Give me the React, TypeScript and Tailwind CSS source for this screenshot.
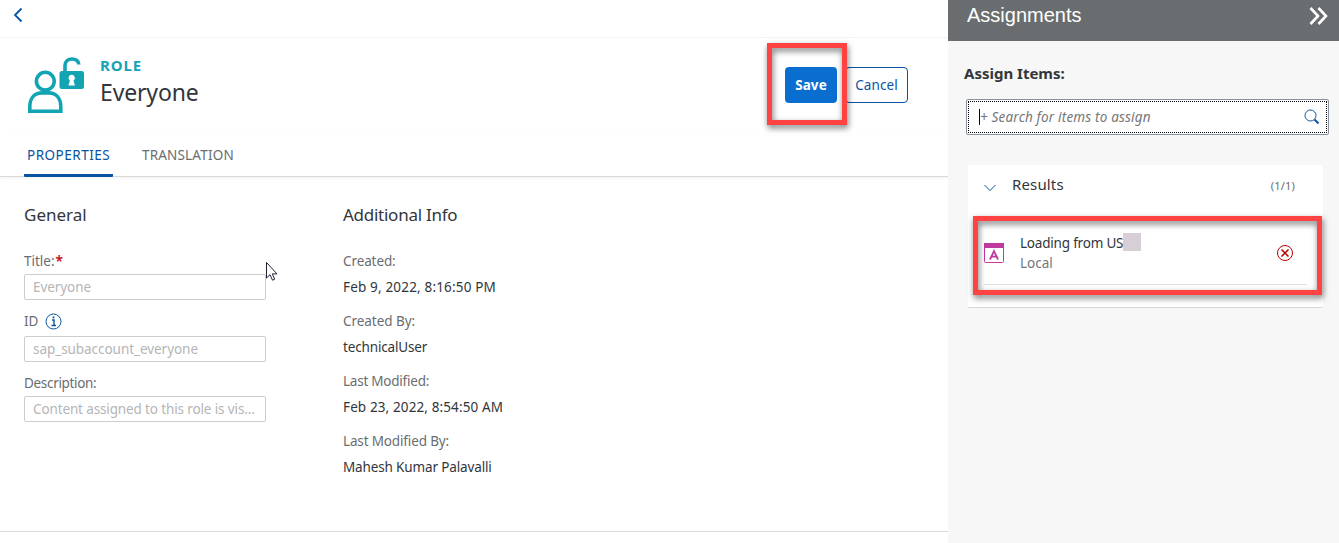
import type { ReactNode } from "react";

function Label({ children }: { children: ReactNode }) {
  return <div className="flex h-5 items-center whitespace-nowrap text-[#6a6d70]">{children}</div>;
}

function Field({ label, value, className, boxClass, valueClass }: { label: ReactNode; value: string; className: string; boxClass: string; valueClass: string }) {
  return (
    <div className={className}>
      <Label>{label}</Label>
      <div className={"flex h-[26px] w-[242px] items-center rounded-[2px] border border-[#cbcdd1] pl-2 text-[#b4b5b7] " + boxClass}>
        <span className={"whitespace-nowrap " + valueClass}>{value}</span>
      </div>
    </div>
  );
}

function Info({ label, value, labelClass, valueClass }: { label: string; value: string; labelClass: string; valueClass: string }) {
  return (
    <div className="h-[60px]">
      <Label><span className={labelClass}>{label}</span></Label>
      <div className="mt-[6px] flex h-5 items-center whitespace-nowrap text-[#32363a]"><span className={valueClass}>{value}</span></div>
    </div>
  );
}

function Highlight({ className }: { className: string }) {
  return <div className={"pointer-events-none absolute border-[5px] border-[#ff4343] drop-shadow-[1px_3px_3px_rgba(0,0,0,0.55)] " + className} />;
}

export default function App() {
  return (
    <div className="relative flex h-[543px] w-[1339px] overflow-hidden bg-white font-['Noto_Sans',sans-serif] text-[13.5px] leading-5">
      <main className="flex w-[948px] shrink-0 flex-col">
        <div className="flex h-[38px] shrink-0 border-b border-[#f4f4f4] pl-[13px] pt-[7px]">
          <svg width="11" height="16" viewBox="0 0 11 16" fill="none" stroke="#0854a0" strokeWidth="1.8"><path d="M8.500 1.500 2 8l6.500 6.500" /></svg>
        </div>
        <header className="flex h-[98px] shrink-0 pl-[27px] pt-[18px]">
          <svg width="58" height="58" viewBox="0 0 58 58" fill="none" stroke="#13a4b4" strokeWidth="3.600">
            <circle cx="18.300" cy="25.200" r="8.900" />
            <path d="M2.800 55.200v-4.400C2.800 41 8.500 36.900 15 36.900h6.600c6.500 0 12.200 4.100 12.200 13.900v4.400z" />
            <path d="M38 16V9.500C38 1 51.800 1 51.800 8.500" />
            <rect x="32.500" y="15" width="24.500" height="18" rx="2.500" fill="#13a4b4" stroke="none" />
            <path d="M44.700 18.800a3.300 3.300 0 0 1 1.800 6l1.500 4.700h-6.600l1.500-4.700a3.300 3.300 0 0 1 1.800-6z" fill="white" stroke="none" />
          </svg>
          <div className="ml-[15px] w-[685px]">
            <div className="-mt-px text-[15px] font-bold leading-5 tracking-[0.9px] text-[#13a4b4]">ROLE</div>
            <h1 className="mt-px text-[23px] leading-8 tracking-[-0.150px] text-[#32363a]">Everyone</h1>
          </div>
          <div className="mt-[11px] flex gap-2">
            <button className="h-9 w-[52px] rounded-[4px] bg-[#0a6ed1] font-bold tracking-[0.1px] text-white">Save</button>
            <button className="h-9 w-[63px] rounded-[4px] border border-[#0854a0] tracking-[0.1px] text-[#0854a0]">Cancel</button>
          </div>
        </header>
        <nav className="flex h-[41px] shrink-0 gap-[26px] border-b border-[#d9d9d9] pl-6 shadow-[0_1px_3px_rgba(0,0,0,0.06)]">
          <div className="h-[41px] w-[89px] rounded-b-[1px] border-b-[3px] border-[#0854a0] pl-[3px] pt-[9px] tracking-[0.500px] text-[#0854a0]">PROPERTIES</div>
          <div className="pl-[3px] pt-[9px] tracking-[0.180px] text-[#6a6d70]">TRANSLATION</div>
        </nav>
        <div className="flex h-[355px] shrink-0 border-b border-[#d9d9d9] pl-6 pt-[26px]">
          <section className="w-[319px]">
            <h2 className="h-12 text-[17px] leading-6 text-[#32363a]">General</h2>
            <Field className="" boxClass="mt-[3px]" valueClass="tracking-[-0.080px]" label={<>Title:<span className="ml-px font-bold text-[#cc1919]">*</span></>} value="Everyone" />
            <Field className="mt-[11px]" boxClass="mt-[5px]" valueClass="tracking-[-0.050px]" label={<>ID<svg className="ml-[7px] mt-px" width="17" height="17" viewBox="0 0 17 17" fill="none" stroke="#0854a0"><circle cx="8.500" cy="8.500" r="7.500" /><path d="M7 7h2v5M6.500 12.500h4.500" strokeWidth="1.400" /><path d="M8.500 3.500v1.800" strokeWidth="1.800" /></svg></>} value="sap_subaccount_everyone" />
            <Field className="mt-[11px]" boxClass="mt-[3px]" valueClass="tracking-[-0.130px]" label={<span className="tracking-[-0.320px]">Description:</span>} value="Content assigned to this role is vis..." />
          </section>
          <section>
            <h2 className="h-12 text-[17px] leading-6 tracking-[-0.260px] text-[#32363a]">Additional Info</h2>
            <Info label="Created:" value="Feb 9, 2022, 8:16:50 PM" labelClass="tracking-[-0.100px]" valueClass="tracking-[0.170px]" />
            <Info label="Created By:" value="technicalUser" labelClass="tracking-[-0.050px]" valueClass="tracking-[-0.150px]" />
            <Info label="Last Modified:" value="Feb 23, 2022, 8:54:50 AM" labelClass="tracking-[-0.230px]" valueClass="tracking-[0.120px]" />
            <Info label="Last Modified By:" value="Mahesh Kumar Palavalli" labelClass="tracking-[-0.150px]" valueClass="tracking-[-0.140px]" />
          </section>
        </div>
      </main>
      <aside className="w-[391px] shrink-0 bg-[#f7f7f7]">
        <div className="flex h-[41px] justify-between bg-[#6a6d70] pl-[19px] pr-[10px] pt-[3px] font-['Liberation_Sans',Arial,sans-serif] text-[20px] leading-6 text-white">
          Assignments
          <svg className="mt-[3px]" width="20" height="20" viewBox="0 0 20 20" fill="none" stroke="white" strokeWidth="2.600"><path d="m1.500 2 7.500 8-7.500 8M9.500 2l7.500 8-7.500 8" /></svg>
        </div>
        <div className="ml-4 mt-5 h-[38px] text-[15px] font-bold leading-6 text-[#32363a]">Assign Items:</div>
        <div className="ml-[18px] h-9 w-[363px] rounded-[2px] border border-[#89919a] bg-white p-px">
          <div className="flex h-full items-center border border-dotted border-black pl-[10px] pr-[6px]">
            <span className="h-4 w-px bg-black" />
            <span className="grow italic tracking-[0.180px] text-[#74777a]">+ Search for items to assign</span>
            <svg width="16" height="16" viewBox="0 0 16 16" fill="none" stroke="#0854a0"><circle cx="6.500" cy="6.500" r="5.500" /><path d="m10.500 10.500 4 4" strokeWidth="2" /></svg>
          </div>
        </div>
        <div className="ml-5 mt-[30px] h-[143px] w-[355px] border-b border-[#d9d9d9] bg-white px-4">
          <div className="flex h-[60px] pt-[7px] text-[15px] leading-6 text-[#32363a]">
            <svg className="mt-3" width="12" height="8" viewBox="0 0 12 8" fill="none" stroke="#0854a0"><path d="m.5 1 5.500 5.500L11.500 1" /></svg>
            <span className="ml-4 grow tracking-[0.150px]">Results</span>
            <span className="mr-3 pt-[2px] text-[11px] tracking-[0.200px] text-[#6a6d70]">(1/1)</span>
          </div>
          <div className="flex h-[60px] border-b border-[#e0e0e0]">
            <svg className="mt-[18px]" width="20" height="20" viewBox="0 0 20 20" fill="none" stroke="#c0399f"><rect x=".5" y=".5" width="19" height="19" rx="1" /><path d="M0 2.500h20" strokeWidth="5" /><path d="m6 16.500 4-8.500 4 8.500M7.500 13.700h5" strokeWidth="1.800" /></svg>
            <div className="ml-4 grow pt-2">
              <div className="flex text-[#32363a]"><span className="w-[103px] whitespace-nowrap tracking-[-0.200px]">Loading from US</span><span className="h-[18px] w-[18px] bg-[#d8ced6]" /></div>
              <div className="text-[#74777a]">Local</div>
            </div>
            <svg className="mr-[14px] mt-5" width="16" height="16" viewBox="0 0 16 16" fill="none" stroke="#bb0000"><circle cx="8" cy="8" r="7.500" /><path d="m4.500 4.500 7 7m0-7-7 7" strokeWidth="1.500" /></svg>
          </div>
        </div>
      </aside>
      <Highlight className="left-[767px] top-[43px] h-[82px] w-20" />
      <Highlight className="left-[973px] top-[216px] h-[79px] w-[349px]" />
      <svg className="absolute left-[265px] top-[261px]" width="14" height="21" viewBox="0 0 14 21"><path d="M1.500 1.500v15.500l3.500-3.300 2.500 5.500 2.200-1-2.400-5.300H12z" fill="white" stroke="#221c35" /></svg>
    </div>
  );
}
